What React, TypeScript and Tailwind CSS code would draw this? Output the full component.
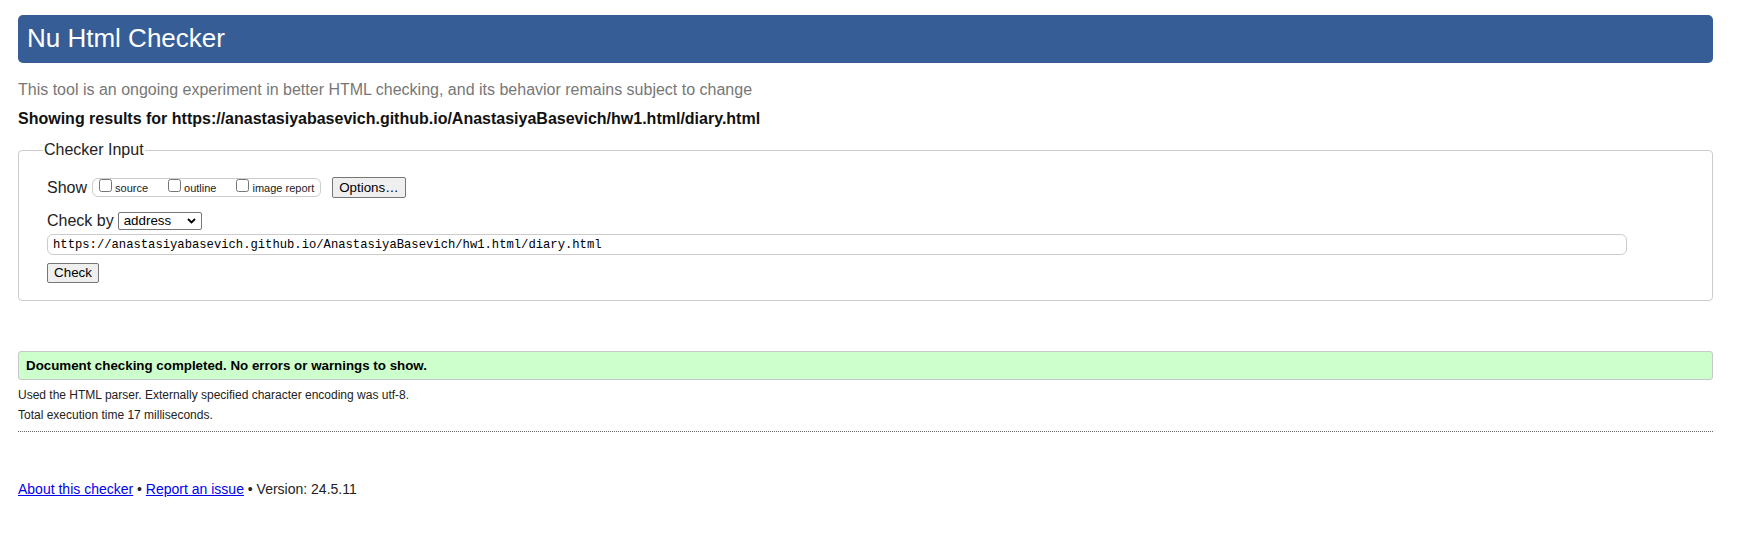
import React from "react";

export default function App() {
  return (
    <div className="w-[1764px] h-[534px] bg-white pl-[18px] pt-[15px] font-['Liberation_Sans',Arial,sans-serif] text-[#222]">
      <div className="w-[1695px]">
        <h1 className="h-[48px] rounded-[5px] bg-[#365d95] pl-[9px] pt-[8px] text-[26px] leading-[30px] font-normal text-white">
          Nu Html Checker
        </h1>
        <p className="mt-[17px] text-[16px] leading-[20px] text-[#777]">
          This tool is an ongoing experiment in better HTML checking, and its behavior remains subject to change
        </p>
        <p className="mt-[8.5px] text-[16px] leading-[20px] font-bold text-[#111]">
          Showing results for https://anastasiyabasevich.github.io/AnastasiyaBasevich/hw1.html/diary.html
        </p>
        <fieldset className="mt-[11.5px] border border-[#cccccc] rounded-[4px] pb-[17px]">
          <legend className="ml-[24px] px-[1px] text-[16px] leading-[20px] text-[#222]">Checker Input</legend>
          <div className="pl-[28px] pt-[17px]">
            <div className="flex items-center h-[21px]">
              <span className="text-[16px] leading-[20px]">Show</span>
              <div className="ml-[5px] flex items-start h-[19px] border border-[#cccccc] rounded-[6px] pl-[6px] pr-[6px] gap-[20px]">
                <label className="flex items-start">
                  <input type="checkbox" className="w-[13px] h-[13px] mr-[3px]" />
                  <span className="mt-[3px] text-[11px] leading-[13px]">source</span>
                </label>
                <label className="flex items-start">
                  <input type="checkbox" className="w-[13px] h-[13px] mr-[3px]" />
                  <span className="mt-[3px] text-[11px] leading-[13px]">outline</span>
                </label>
                <label className="flex items-start">
                  <input type="checkbox" className="w-[13px] h-[13px] mr-[3px]" />
                  <span className="mt-[3px] text-[11px] leading-[13px]">image report</span>
                </label>
              </div>
              <button className="ml-[11px] h-[21px] px-[6px] border border-[#767676] rounded-[2px] bg-[#efefef] text-[13.33px] leading-[16px] text-black">
                Options…
              </button>
            </div>
            <div className="mt-[13px] flex items-center h-[19px]">
              <span className="text-[16px] leading-[20px]">Check by</span>
              <div className="relative ml-[4px] w-[84px] h-[18px]">
                <select
                  defaultValue="address"
                  className="block appearance-none w-[84px] h-[18px] border border-[#767676] rounded-[2px] bg-white pl-[5px] text-[13.33px] leading-[16px] text-black"
                >
                  <option value="address">address</option>
                  <option value="file">file upload</option>
                  <option value="text">text input</option>
                </select>
                <svg
                  className="absolute right-[6px] top-[6px] pointer-events-none"
                  width="9"
                  height="6"
                  viewBox="0 0 9 6"
                >
                  <path d="M1 1 L4.5 4.5 L8 1" stroke="#000" strokeWidth="1.8" fill="none" />
                </svg>
              </div>
            </div>
            <input
              readOnly
              value="https://anastasiyabasevich.github.io/AnastasiyaBasevich/hw1.html/diary.html"
              className="block mt-[4px] w-[1580px] h-[21px] border border-[#cccccc] rounded-[6px] px-[5px] font-['Liberation_Mono',monospace] text-[12.2px] text-black"
            />
            <button className="block mt-[8px] h-[20px] w-[52px] border border-[#767676] rounded-[2px] bg-[#efefef] text-[13.33px] leading-[16px] text-black">
              Check
            </button>
          </div>
        </fieldset>
        <div className="mt-[50px] border border-[#c8c8c8] rounded-[3px] bg-[#ccffcc] pl-[7px] pt-[6px] pb-[5px] text-[13.33px] leading-[16px] font-bold text-black">
          Document checking completed. No errors or warnings to show.
        </div>
        <p className="mt-[4.5px] text-[12px] leading-[20px]">
          Used the HTML parser. Externally specified character encoding was utf-8.
        </p>
        <p className="text-[12px] leading-[20px]">Total execution time 17 milliseconds.</p>
        <div className="mt-[6px] border-t border-dotted border-[#666]" />
        <p className="mt-[47.5px] text-[14px] leading-[20px]">
          <a href="#" className="text-[#0000ee] underline">About this checker</a>
          {" • "}
          <a href="#" className="text-[#0000ee] underline">Report an issue</a>
          {" • Version: 24.5.11"}
        </p>
      </div>
    </div>
  );
}
